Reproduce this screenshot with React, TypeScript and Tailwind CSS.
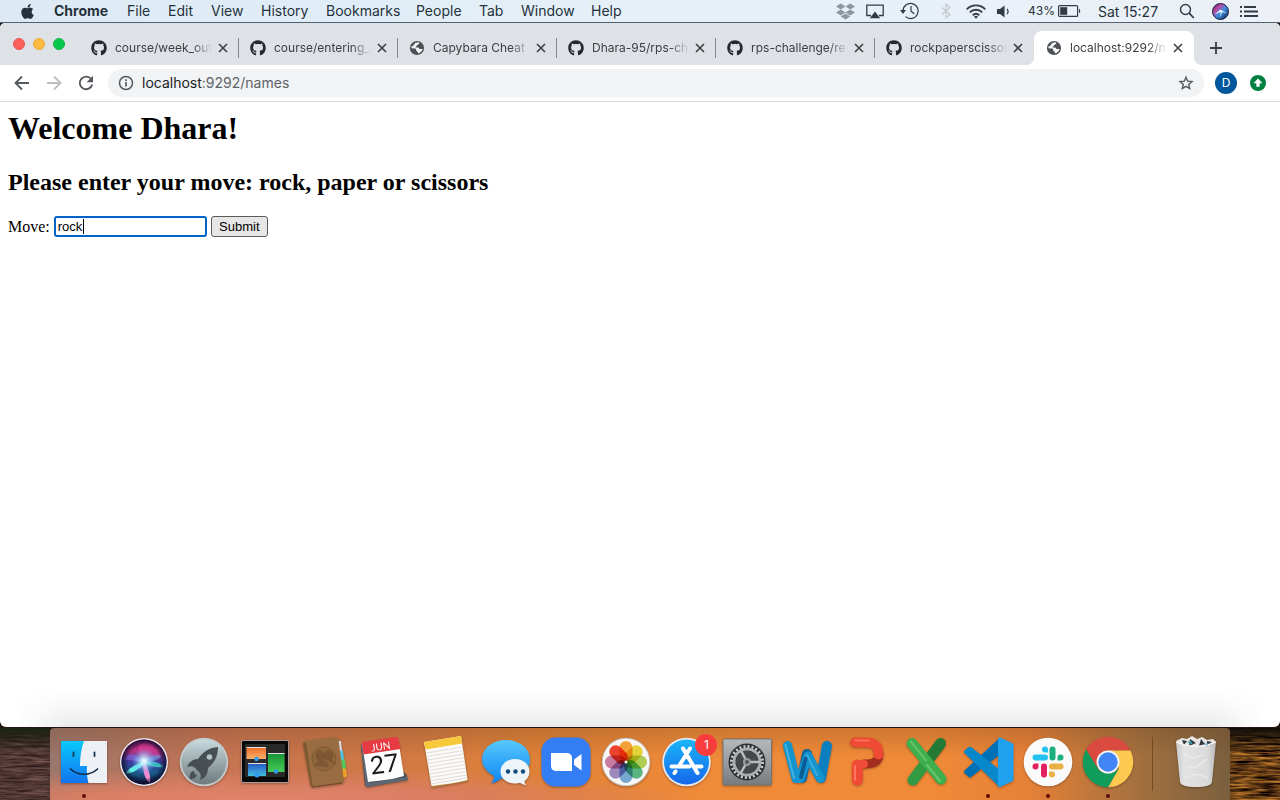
import { useState } from "react";
import type { ReactNode } from "react";
import { FaApple, FaDropbox, FaGithub } from "react-icons/fa";

/* ---------- Menu bar ---------- */

const menus = [
  { label: "Chrome", cls: "w-[73px] font-bold" },
  { label: "File", cls: "w-[41px]" },
  { label: "Edit", cls: "w-[43px]" },
  { label: "View", cls: "w-[50px]" },
  { label: "History", cls: "w-[65px]" },
  { label: "Bookmarks", cls: "w-[90px]" },
  { label: "People", cls: "w-[63px]" },
  { label: "Tab", cls: "w-[42px]" },
  { label: "Window", cls: "w-[70px]" },
  { label: "Help", cls: "w-[40px]" },
];

function SiriOrb({ id }: { id: string }) {
  return (
    <>
      <defs>
        <radialGradient id={id + "core"} cx="50%" cy="50%" r="50%">
          <stop offset="0" stopColor="#fff" />
          <stop offset=".25" stopColor="#c8f4ff" stopOpacity=".85" />
          <stop offset="1" stopColor="#5aa0ff" stopOpacity="0" />
        </radialGradient>
        <linearGradient id={id + "bg"} x1="0" y1="0" x2="0" y2="1">
          <stop offset="0" stopColor="#8a2070" />
          <stop offset=".25" stopColor="#b8307e" />
          <stop offset=".5" stopColor="#3c3a9c" />
          <stop offset=".75" stopColor="#1a5c8a" />
          <stop offset="1" stopColor="#140e38" />
        </linearGradient>
        <radialGradient id={id + "edge"}>
          <stop offset=".7" stopColor="#0a0a28" stopOpacity="0" />
          <stop offset="1" stopColor="#0a0a28" stopOpacity=".85" />
        </radialGradient>
      </defs>
      <circle cx="26" cy="26" r="24" fill="#eeeaf0" />
      <circle cx="26" cy="26" r="22.5" fill={"url(#" + id + "bg)"} />
      <path d="M26 26C17 12 20 8 27 7c10 0 16 8 15 15-3-5-10-2-16 4z" fill="#e8409a" opacity=".5" />
      <path d="M26 25C15 16 9 17 6 24c5-1 12 1 20 3z" fill="#7a62d8" opacity=".7" />
      <path d="M26 26C17 28 10 33 7 38c8-1 15-5 20-11z" fill="#62f0e6" />
      <path d="M26 26c8-2 15 0 20 5-7 1-14 0-20-4z" fill="#3ad8c0" opacity=".8" />
      <path d="M26 25c7-6 13-7 18-5-4 4-10 6-18 6z" fill="#7ab8f4" opacity=".5" />
      <path d="M25 27c0 10 2 16 7 21 1-7-1-15-5-21z" fill="#f48ad0" />
      <circle cx="26" cy="26" r="22.5" fill={"url(#" + id + "edge)"} />
      <circle cx="26" cy="25" r="13" fill={"url(#" + id + "core)"} />
    </>
  );
}

function MenuBar() {
  return (
    <header className="flex h-[23px] shrink-0 items-center border-b border-[#50616f] bg-linear-to-r from-[#ddeaf4] via-[#e5f0f8] to-[#edf1f7] pr-[22px] pl-[19px] text-[14px] text-[#25323c]">
      <a href="#apple" aria-label="Apple menu" className="w-[35px]">
        <FaApple className="size-[17px]" />
      </a>
      <nav className="flex leading-[22px]">
        {menus.map((m) => (
          <a key={m.label} href={"#" + m.label.toLowerCase()} className={m.cls}>
            {m.label}
          </a>
        ))}
      </nav>
      <div className="ml-auto flex items-center">
        <FaDropbox className="mr-[11px] size-[19px] text-[#8e979f]" />
        <svg viewBox="0 0 18 15" className="mr-[16px] h-[15px] w-[18px]">
          <path d="M5 11.5H.8V1.2h16.4v10.3H13" fill="none" stroke="#333c45" strokeWidth="1.3" />
          <path d="M9 7.5l5.2 6.7H3.8z" fill="#333c45" />
        </svg>
        <svg viewBox="0 0 20 18" className="mr-[21px] h-[18px] w-[20px]" fill="none" stroke="#333c45" strokeWidth="1.2">
          <path d="M3 9a7.6 7.6 0 1 1 2.5 5.6" />
          <path d="M11 4v5.2l3.2 2.6" />
          <path d="M0 8h6L3 12z" fill="#333c45" stroke="none" />
        </svg>
        <svg viewBox="0 0 10 16" className="mr-[15px] h-[16px] w-[10px]" fill="none" stroke="#c3c9cf" strokeWidth="1.2">
          <path d="M1 4.5l8 7-4 3.5V1l4 3.5-8 7" />
        </svg>
        <svg viewBox="0 0 20 15" className="mr-[10px] h-[15px] w-[20px]" fill="none" stroke="#333c45" strokeWidth="1.9">
          <path d="M.8 5.3c5-5.2 13.4-5.2 18.4 0M3.8 8.3c3.5-3.5 8.9-3.5 12.4 0M6.7 11.2c2-1.9 4.6-1.9 6.6 0" />
          <path d="M10 14.8l-2-2.2c1.2-1 2.8-1 4 0z" fill="#333c45" stroke="none" />
        </svg>
        <svg viewBox="0 0 16 13" className="mr-[16px] h-[13px] w-[16px]">
          <path d="M1 4h3l4.5-3.5v12L4 9H1z" fill="#333c45" />
          <path d="M11 3.8c1.3 1.6 1.3 3.8 0 5.4" fill="none" stroke="#333c45" strokeWidth="1.2" />
        </svg>
        <span className="w-[30px] text-[12px]">43%</span>
        <svg viewBox="0 0 24 12" className="mr-[16px] h-[12px] w-[24px]">
          <rect x=".6" y=".6" width="19" height="10.8" rx="1" fill="none" stroke="#333c45" strokeWidth="1.2" />
          <rect x="2.2" y="2.2" width="7" height="7.6" fill="#333c45" />
          <path d="M21 3.8c1.6.6 1.6 3.8 0 4.4z" fill="#333c45" />
        </svg>
        <span className="w-[81px]">Sat 15:27</span>
        <svg viewBox="0 0 16 16" className="mr-[17px] h-[16px] w-[16px]" fill="none" stroke="#333c45" strokeWidth="1.4">
          <circle cx="6.5" cy="6.5" r="5" />
          <path d="M10.2 10.2l4.6 4.8" strokeWidth="1.8" />
        </svg>
        <svg viewBox="0 0 17 17" className="mr-[11px] size-[17px]">
          <defs>
            <linearGradient id="menuSiri" x1="0" y1="0" x2="1" y2="1">
              <stop offset="0" stopColor="#1b2f72" />
              <stop offset=".3" stopColor="#c0479c" />
              <stop offset=".55" stopColor="#3a8fe0" />
              <stop offset="1" stopColor="#101840" />
            </linearGradient>
          </defs>
          <circle cx="8.5" cy="8.5" r="8" fill="url(#menuSiri)" stroke="#1a1f3c" />
          <path d="M8.5 6.5l-6 5 6-2.500v5.500l1.500-5.500 5 1.500z" fill="#e9f6ff" />
        </svg>
        <svg viewBox="0 0 18 11" className="h-[11px] w-[18px]" stroke="#333c45" strokeWidth="1.8">
          <path d="M0 1h2M0 5.5h2M0 10h2M4 1h12M4 5.5h14M4 10h14" />
        </svg>
      </div>
    </header>
  );
}

/* ---------- Browser tabs ---------- */

function Globe() {
  return (
    <svg viewBox="0 0 16 16" className="size-[16px] shrink-0">
      <circle cx="8" cy="8" r="7.1" fill="#4d5156" />
      <path d="M6.9 2.4c1 .6 1.600-.2 2.700 0 1 .3.700 1.200 0 1.500-.6.300-.5 1-1.200 1.200-.8.200-.4 1-1.200 1.300-.6.200-.2.700-.8 1h2.800c.9.300.6 1.400 1.600 1.600.9.200 1.800-.2 2.900 0-.6 2.200-2.300 3.900-4.500 4.400l-.4-1.300c-.3-.9-1.500-.8-1.600-1.900 0-.9-.2-1.500-1.100-1.700L2.400 8.300c-.1-.9.100-1.700.4-2.400.9.600 1.700.100 1.900-.8.200-1 1.300-1 1.300-1.900z" fill="#f4f5f6" />
    </svg>
  );
}

const tabs = [
  { title: "course/week_out", github: true },
  { title: "course/entering_", github: true },
  { title: "Capybara Cheat", github: false },
  { title: "Dhara-95/rps-ch", github: true },
  { title: "rps-challenge/re", github: true },
  { title: "rockpaperscissor", github: true },
  { title: "localhost:9292/n", github: false },
];

function Tab({ title, github, active, divided }: { title: string; github: boolean; active: boolean; divided: boolean }) {
  return (
    <div
      className={
        active
          ? "relative flex h-[34px] w-[160px] min-w-0 items-center rounded-t-[8px] bg-white pr-[11px] pl-[12px]"
          : "flex h-[34px] w-[159px] min-w-0 items-center pl-[11px]"
      }
    >
      {active && (
        <>
          <span className="absolute bottom-0 -left-[8px] size-[8px] bg-[radial-gradient(circle_at_0_0,transparent_8px,white_8px)]" />
          <span className="absolute -right-[8px] bottom-0 size-[8px] bg-[radial-gradient(circle_at_100%_0,transparent_8px,white_8px)]" />
        </>
      )}
      {github ? <FaGithub className="size-[16px] shrink-0 text-[#24292e]" /> : <Globe />}
      <a href="#tab" className="ml-[8px] min-w-0 flex-1 overflow-hidden mask-r-from-80% text-[12px] leading-[20px] whitespace-nowrap text-[#3c4043]">
        {title}
      </a>
      <button aria-label={"Close " + title} className="ml-[6px] shrink-0">
        <svg viewBox="0 0 10 10" className="size-[10px]" stroke="#3c4043" strokeWidth="1.6">
          <path d="M1 1l8 8M9 1L1 9" />
        </svg>
      </button>
      {!active && <span className={divided ? "ml-[10px] h-[20px] w-px shrink-0 bg-[#84888d]" : "ml-[10px] w-px shrink-0"} />}
    </div>
  );
}

function Toolbar() {
  return (
    <div className="flex h-[37px] items-center border-b border-[#d9dbdd] bg-white px-[14px]">
      <button aria-label="Back">
        <svg viewBox="0 0 16 16" className="size-[16px]" fill="none" stroke="#55595e" strokeWidth="1.8">
          <path d="M15 8H2M8 1.5L1.5 8 8 14.5" />
        </svg>
      </button>
      <button aria-label="Forward" className="ml-[16px]">
        <svg viewBox="0 0 16 16" className="size-[16px]" fill="none" stroke="#bcbec1" strokeWidth="1.8">
          <path d="M1 8h13M8 1.5L14.5 8 8 14.5" />
        </svg>
      </button>
      <button aria-label="Reload" className="ml-[16px]">
        <svg viewBox="0 0 16 16" className="size-[16px]">
          <path d="M13.2 4.2A6.3 6.3 0 1 0 14.2 9.5" fill="none" stroke="#55595e" strokeWidth="1.9" />
          <path d="M15 .8v6.4H8.6z" fill="#55595e" />
        </svg>
      </button>
      <form className="ml-[14px] flex h-[28px] flex-1 items-center rounded-full bg-[#f1f3f4] px-[10px]">
        <svg viewBox="0 0 16 16" className="size-[16px]" fill="none" stroke="#55595e" strokeWidth="1.5">
          <circle cx="8" cy="8" r="6.5" />
          <path d="M8 7v4.5M8 4.3V6" strokeWidth="1.7" />
        </svg>
        <a href="#address" aria-label="Address" className="ml-[8px] flex-1 text-[14px] leading-[18px] text-[#5f6368]">
          <span className="text-[#202124]">localhost</span>:9292/names
        </a>
        <button type="button" aria-label="Bookmark this page">
          <svg viewBox="0 0 16 16" className="size-[16px]" fill="none" stroke="#55595e" strokeWidth="1.4">
            <path d="M8 2.2l1.7 4 4.300.4-3.300 2.800 1 4.200L8 11.400l-3.700 2.200 1-4.200L2 6.600l4.300-.4z" />
          </svg>
        </button>
      </form>
      <button aria-label="Profile" className="ml-[11px] size-[22px] rounded-full bg-[#00579b] text-[12px] text-white">
        D
      </button>
      <button aria-label="Update" className="ml-[13px]">
        <svg viewBox="0 0 16 16" className="size-[16px]">
          <circle cx="8" cy="8" r="8" fill="#008141" />
          <path d="M8 3.5l4.5 4.7H9.7v3.6H6.3V8.2H3.5z" fill="#fff" />
        </svg>
      </button>
    </div>
  );
}

/* ---------- Dock icons, each on a 52 unit grid ---------- */

const petals = ["#f9a63a", "#ecd93a", "#b5d456", "#5dbb86", "#79add8", "#a48fc6", "#d07fa8", "#f2452f"];

function Finder() {
  return (
    <>
      <defs>
        <linearGradient id="fin" x1="0" y1="0" x2="0" y2="1">
          <stop offset="0" stopColor="#08c8fb" />
          <stop offset="1" stopColor="#1275ee" />
        </linearGradient>
      </defs>
      <path d="M3 5h46v42H3z" fill="#edf1f6" />
      <path d="M3 5h23c-3 8-4 16-4 25h7c-.5 6 .2 12 1.5 17H3z" fill="url(#fin)" />
      <path d="M15.5 16.5v3.5M36.5 16.5v3.5" stroke="#17334d" strokeWidth="1.8" strokeLinecap="round" />
      <path d="M12.5 33C20 40 32 40 39.5 33" fill="none" stroke="#122b44" strokeWidth="1.7" strokeLinecap="round" />
    </>
  );
}

function Launchpad() {
  return (
    <>
      <defs>
        <linearGradient id="lau" x1="0" y1="0" x2="0" y2="1">
          <stop offset="0" stopColor="#c7dade" />
          <stop offset="1" stopColor="#6f7a7d" />
        </linearGradient>
      </defs>
      <circle cx="26" cy="26" r="24.3" fill="#c5cbcc" />
      <circle cx="26" cy="26" r="22.5" fill="url(#lau)" />
      <path d="M40 11c-10 1-15 5-20 12-5 0-9 3-11 8 3-1 5-1 7 0l2 2 4 4c1 2 1 4 0 7 6-2 8-7 8-12 6-5 10-11 10-21z" fill="#484f53" />
      <path d="M16 35c-3 0-5 4-4 8 4 0 7-2 7-5l-2 1z" fill="#484f53" />
      <circle cx="31.500" cy="21" r="2.8" fill="#b5c4c8" />
    </>
  );
}

function Spaces() {
  return (
    <>
      <defs>
        <linearGradient id="spo" x1="0" y1="0" x2="0" y2="1"><stop stopColor="#ef6a25" /><stop offset="1" stopColor="#f6b06c" /></linearGradient>
        <linearGradient id="spb" x1="0" y1="0" x2="0" y2="1"><stop stopColor="#2252c5" /><stop offset="1" stopColor="#45bedc" /></linearGradient>
        <linearGradient id="spg" x1="0" y1="0" x2="0" y2="1"><stop stopColor="#159335" /><stop offset="1" stopColor="#48cb56" /></linearGradient>
      </defs>
      <rect x="2" y="4" width="48" height="43" rx="2" fill="#a99a96" />
      <rect x="3" y="5" width="46" height="41" rx="1" fill="#090909" />
      <path d="M6 8h40v33H6z" fill="#29292a" />
      <path d="M7.500 11H27v12H7.500z" fill="url(#spo)" />
      <path d="M9 27h18v13H9z" fill="url(#spb)" />
      <path d="M29 17h16.500v19H29z" fill="url(#spg)" />
      <path d="M7.500 11.500H27M9 27.500h18M29 17.500h16.500" stroke="#e8dfe0" />
      <g fill="#2c9bf0"><circle cx="17.500" cy="23" r="2.2" /><circle cx="18" cy="39" r="2.5" /><circle cx="37" cy="35.500" r="2.2" /></g>
    </>
  );
}

function Contacts() {
  return (
    <>
      <path d="M38 5l4 0 1 10-4 1z" fill="#d8dde0" />
      <path d="M40 15l4-.5 1 9-4 1z" fill="#4fc4e0" />
      <path d="M41 24l5-.5 1 9-5 1z" fill="#52c75c" />
      <path d="M42 33l5-.5 1 8-5 2z" fill="#efa126" />
      <path d="M4 7q0-2 2-2.300L36 1q3 0 3.500 2.500L45 45q0 2-2 2.300L14 51.500q-2 0-2.500-2z" fill="#996d41" />
      <path d="M4 7l3-1 7 45q-2 0-2.500-2z" fill="#805831" />
      <path d="M13 51l30-4" stroke="#6b4727" />
      <circle cx="25" cy="23" r="12" fill="#8f653c" stroke="#80592f" />
      <path d="M16 30c1-4 4-3 4-5-3-2-4-10 1-10s5 8 3 10c1 2 5 1 5 6M27 24c-2-4-1-10 3-9 4 0 5 7 2 9 1 2 3 1 4 4" fill="#7d5733" stroke="#735031" strokeWidth=".7" />
    </>
  );
}

function Calendar() {
  return (
    <>
      <path d="M2 9l5-1 40 30 2 6-40 7-3-2z" fill="#46515c" />
      <path d="M2 9l2 0 7 38 37-6 1 3-42 7z" fill="#5d6873" />
      <path d="M3 7l36-5 6 38q-10 3-19 4l-17 2z" fill="#fdfdfd" />
      <path d="M3 8q0-2 2-2.300L37 1q2 0 2.500 2l2 10L4.500 18.500z" fill="#e63b43" />
      <g transform="rotate(-8 24 26)" textAnchor="middle" fontFamily="Lato, sans-serif">
        <text x="24" y="14" fontSize="10" fill="#fff">JUN</text>
        <text x="25" y="37" fontSize="25" fontWeight="400" fill="#1b1b1b">27</text>
      </g>
    </>
  );
}

function Notes() {
  return (
    <>
      <path d="M5 6L42 0l7 45-36 6.500z" fill="#b78933" />
      <path d="M5 6L42 0l6.500 44q-8 2-17 3.500L12.500 50z" fill="#fbfaf8" />
      <path d="M5 6L42 0l1.200 7.500L6.500 13.500z" fill="#f7c83a" />
      <g stroke="#d3d0ce" strokeWidth=".7">
        <path d="M7 17l37-6M7.500 20.500l37-6M8 24l37-6M8.500 27.500l37-6M9 31l37-6M9.500 34.500l37-6M10 38l37-6M10.500 41.500l37-6M11 45l37-6M12 48l36-6" />
      </g>
    </>
  );
}

function Messages() {
  return (
    <>
      <defs>
        <linearGradient id="msg" x1="0" y1="0" x2="0" y2="1"><stop stopColor="#56c9fb" /><stop offset="1" stopColor="#1186f2" /></linearGradient>
      </defs>
      <path d="M26 4c13 0 24 8 24 19.500S39 43 26 43c-2 0-4 0-5.500-.5C18 45.500 14 47 11 47c2-2 3-4 3-7C7 36.500 2 30.500 2 23.500 2 12 13 4 26 4z" fill="url(#msg)" />
      <path d="M35 23c8 0 14.500 5 14.500 12.500 0 4-2 7.500-5 9.500 0 2 .5 3 2 4-3 0-5-1-6.500-2.200-1.500.5-3 .7-5 .7-8 0-14.500-5-14.500-12S27 23 35 23z" fill="#eef5f9" />
      <g fill="#134b7d"><circle cx="28" cy="35.500" r="2.2" /><circle cx="35.500" cy="35.500" r="2.2" /><circle cx="43" cy="35.500" r="2.2" /></g>
    </>
  );
}

function Zoom() {
  return (
    <>
      <rect x="1.500" y="1.500" width="49" height="49" rx="14" fill="#347ef5" />
      <path d="M11 17h15c4 0 6 2 6 5v13H17c-4 0-6-2-6-5zM34 23.500l7.500-5.500v16.500L34 29z" fill="#fff" />
    </>
  );
}

function Photos() {
  return (
    <>
      <circle cx="26" cy="26" r="24.3" fill="#c9c3be" />
      <circle cx="26" cy="26" r="23.3" fill="#f8f7f5" />
      {petals.map((c, i) => (
        <rect key={c} x="19.500" y="5" width="13" height="21" rx="6.500" fill={c} className="mix-blend-multiply" transform={"rotate(" + i * 45 + " 26 26)"} />
      ))}
      <circle cx="26" cy="26" r="1.5" fill="#fff" />
    </>
  );
}

function AppStore() {
  return (
    <>
      <defs>
        <linearGradient id="aps" x1="0" y1="0" x2="0" y2="1"><stop stopColor="#19b5f8" /><stop offset="1" stopColor="#1668ec" /></linearGradient>
      </defs>
      <circle cx="26.500" cy="26" r="24.3" fill="#e8e9ec" />
      <circle cx="26.500" cy="26" r="22.500" fill="url(#aps)" />
      <g stroke="#fff" strokeWidth="4" strokeLinecap="round" fill="none">
        <path d="M23 12.500L37.500 37M30 12.500L19 30M11.500 30.500h18M36 30.500h5.500M15.500 35.500L14.500 37" />
      </g>
    </>
  );
}

function Settings() {
  return (
    <>
      <defs>
        <linearGradient id="set" x1="0" y1="0" x2="0" y2="1"><stop stopColor="#b6b8ba" /><stop offset=".5" stopColor="#999d9f" /><stop offset="1" stopColor="#777b7d" /></linearGradient>
      </defs>
      <rect x="2" y="3" width="48.500" height="46" rx="1.500" fill="url(#set)" stroke="#737678" />
      <circle cx="26" cy="26" r="18.500" fill="#2d2f30" />
      <circle cx="26" cy="26" r="15.500" fill="none" stroke="#c8cacb" strokeWidth="3" strokeDasharray="2 2.058" />
      <circle cx="26" cy="26" r="13" fill="none" stroke="#aaadaf" strokeWidth="3" />
      <circle cx="26" cy="26" r="11" fill="#454849" />
      <path d="M26 26h13M26 26L20 14.500M26 26l-6.500 11.500" stroke="#b9bcbd" strokeWidth="2.500" />
      <circle cx="26" cy="26" r="4" fill="#9b9ea0" />
      <circle cx="26" cy="26" r="2" fill="#55595b" />
    </>
  );
}

function Word() {
  return (
    <g fill="none" strokeLinecap="round" strokeLinejoin="round" strokeWidth="10">
      <path d="M21 42l5-24" stroke="#0967a1" />
      <path d="M40 42l6-32" stroke="#0b7fc0" />
      <path d="M6.500 9.500L15 42.500h4L27 20l12 22" stroke="#1494cf" strokeWidth="9" />
      <path d="M4.500 9L13 42" stroke="#42b2e1" strokeWidth="2" />
      <path d="M26 19l10 20" stroke="#3aacdd" strokeWidth="2" />
      <path d="M24.500 23L20 41" stroke="#075d94" strokeWidth="4" />
    </g>
  );
}

function PowerPoint() {
  return (
    <g fill="none" strokeLinecap="round" strokeWidth="10">
      <path d="M23 28c11 0 15-3 15-10" stroke="#a52c20" strokeWidth="9" />
      <path d="M14 6.500h11c9 0 12.500 4 12.500 12" stroke="#ef4a34" />
      <path d="M14 4.500h14" stroke="#ff7059" strokeWidth="2" />
      <path d="M16.500 29v15" stroke="#f04a35" strokeWidth="11" />
      <path d="M16 28h7" stroke="#ef4d38" strokeWidth="8" />
      <path d="M14 30v14" stroke="#ff7461" strokeWidth="2" />
    </g>
  );
}

function Excel() {
  return (
    <g fill="none" strokeLinecap="round" strokeWidth="10">
      <path d="M39.500 7.500L28 23" stroke="#247a35" strokeWidth="11" />
      <path d="M24 28L12 44" stroke="#329a42" strokeWidth="11" />
      <path d="M11 7.500L40 43" stroke="#3fae4c" strokeWidth="11" />
      <path d="M10 5.500l15 19M26 29l13 16" stroke="#65c66d" strokeWidth="2" />
    </g>
  );
}

function Code() {
  return (
    <>
      <path d="M38 1.500v17L9 41q-1 1-2 0l-4.500-4q-1-1.500 0-2.500z" fill="#0070b6" />
      <path d="M2.500 17q-1-1 0-2.500L7 11q1-1 2 0l29 23v17.500z" fill="#0788cc" />
      <path d="M38 1.500L50 7q1.500.5 1.500 2v34.500q0 1.500-1.500 2L38 51q-2 .5-2-1V3q0-2 2-1.500z" fill="#1fa1ee" />
    </>
  );
}

function Chrome() {
  return (
    <>
      <path d="M4.200 13.400A25.200 25.200 0 0 1 48.400 14.400H26L14.500 31z" fill="#db4a40" />
      <path d="M48.400 14.400A25.200 25.200 0 0 1 26 51.200L37 32 26 14.400z" fill="#fdca4f" />
      <path d="M4.200 13.400L15.500 32c3 6 13 8 21 1L26 51.200A25.200 25.200 0 0 1 4.200 13.400z" fill="#109c5a" />
      <circle cx="26" cy="26" r="11.500" fill="#f3f5f7" />
      <circle cx="26" cy="26" r="9.700" fill="#4285f4" />
    </>
  );
}

function Trash() {
  return (
    <>
      <defs>
        <linearGradient id="tra"><stop stopColor="#c9c9c9" /><stop offset=".2" stopColor="#e3e3e3" /><stop offset=".8" stopColor="#dadada" /><stop offset="1" stopColor="#b8b8b8" /></linearGradient>
      </defs>
      <path d="M6 5l6-3 5 1 5-3 5 3 5-2 5 3 6-1 3 3-4 6H10z" fill="#e9e7e5" />
      <path d="M6 6q20 9 40 0l-4 40q-1 5-16 5T10 46z" fill="url(#tra)" />
      <path d="M12 4l5 1-3 4zM20 3l6 4-7 3zM31 3l4 5-6 2zM37 5l5 1-5 4z" fill="#34383d" />
      <path d="M17 6l4-1 2 4zM34 8l5-1-2 3z" fill="#3b9fb0" />
      <path d="M6 6q20 9 40 0" fill="none" stroke="#fafafa" />
      <path d="M14 18l10 4 9-3M16 30l9 2 12-9M15 42l12-4 11 4" fill="none" stroke="#ececec" strokeWidth="1.200" />
    </>
  );
}

function Slack() {
  return (
    <>
      <circle cx="26" cy="26" r="24.3" fill="#fbfafa" />
      <path d="M23 10.500a3 3 0 1 0 0 6h3v-3a3 3 0 0 0-3-3zM13.500 18.500H23a3 3 0 0 1 0 6h-9.500a3 3 0 0 1 0-6z" fill="#22c3ee" />
      <path d="M27.500 13.500a3 3 0 0 1 6 0v8a3 3 0 0 1-6 0zM41.500 21.500a3 3 0 1 0-6 0v3h3a3 3 0 0 0 3-3z" fill="#1db07f" />
      <path d="M38.500 27.500a3 3 0 0 1 0 6H30a3 3 0 0 1 0-6zM30 41.500a3 3 0 1 0 0-6h-3v3a3 3 0 0 0 3 3z" fill="#ebb044" />
      <path d="M25 38.500a3 3 0 0 1-6 0v-8a3 3 0 0 1 6 0zM10.500 30.500a3 3 0 1 0 6 0v-3h-3a3 3 0 0 0-3 3z" fill="#e2205f" />
    </>
  );
}

type DockApp = { name: string; art: ReactNode; running?: boolean; badge?: string };

const apps: DockApp[] = [
  { name: "Finder", art: <Finder />, running: true },
  { name: "Siri", art: <SiriOrb id="dock" /> },
  { name: "Launchpad", art: <Launchpad /> },
  { name: "Mission Control", art: <Spaces /> },
  { name: "Contacts", art: <Contacts /> },
  { name: "Calendar", art: <Calendar /> },
  { name: "Notes", art: <Notes /> },
  { name: "Messages", art: <Messages /> },
  { name: "Zoom", art: <Zoom /> },
  { name: "Photos", art: <Photos /> },
  { name: "App Store", art: <AppStore />, badge: "1" },
  { name: "System Preferences", art: <Settings /> },
  { name: "Word", art: <Word /> },
  { name: "PowerPoint", art: <PowerPoint /> },
  { name: "Excel", art: <Excel /> },
  { name: "Visual Studio Code", art: <Code />, running: true },
  { name: "Slack", art: <Slack />, running: true },
  { name: "Google Chrome", art: <Chrome />, running: true },
];

function DockItem({ name, art, running, badge }: DockApp) {
  return (
    <button aria-label={name} className="relative flex flex-col items-center pt-[8px] pb-[2px]">
      <svg viewBox="0 0 52 52" className="size-[52px] overflow-visible drop-shadow-[0_1px_1px_rgba(0,0,0,0.3)]">
        {art}
      </svg>
      <span className={running ? "mt-[6px] size-[4px] rounded-full bg-[#5c0b06]" : "mt-[6px] size-[4px]"} />
      {badge && (
        <span className="absolute top-[6px] -right-[5px] size-[22px] rounded-full bg-[#f93c3e] text-center text-[12px] leading-[22px] text-white">
          {badge}
        </span>
      )}
    </button>
  );
}

/* A strip of rippling water from the desktop wallpaper. */
function Water({ id, tint, left }: { id: string; tint: string; left: boolean }) {
  return (
    <svg className="h-[72px] w-[50px] shrink-0" aria-hidden="true">
      <defs>
        <filter id={id} x="0" y="0" width="100%" height="100%" colorInterpolationFilters="sRGB">
          <feTurbulence type="fractalNoise" baseFrequency=".04 .45" numOctaves="3" seed={left ? 4 : 9} />
          <feColorMatrix
            values={
              left
                ? ".5 0 0 0 .06  .4 0 0 0 .01  .36 0 0 0 .02  0 0 0 0 1"
                : "1.3 0 0 0 -.24  .9 0 0 0 -.2  .3 0 0 0 -.06  0 0 0 0 1"
            }
          />
        </filter>
        <linearGradient id={id + "s"} x1="0" y1="0" x2="0" y2="1">
          <stop stopColor={tint} />
          <stop offset=".35" stopColor={tint} stopOpacity="0" />
        </linearGradient>
      </defs>
      <rect width="50" height="72" filter={"url(#" + id + ")"} />
      <rect width="50" height="72" fill={"url(#" + id + "s)"} />
    </svg>
  );
}

function Dock() {
  return (
    <footer className="flex h-[73px] shrink-0 border-t border-[#201510] bg-[#1c130e]">
      <Water id="wl" tint="#1b2110" left />
      <div className="flex min-w-0 flex-1 rounded-t-[4px] bg-[radial-gradient(ellipse_at_18%_100%,#df8468_0%,#da7f64_12%,transparent_32%),linear-gradient(to_bottom,rgba(100,60,30,0.25),transparent_40%),linear-gradient(to_right,#9a766c_0%,#c57353_14%,#d07845_28%,#e08237_42%,#ef8a38_55%,#f08a38_75%,#e58037_83%,#a5713f_92%,#7a603e_100%)] px-[8px]">
        <div className="flex min-w-0 flex-1 justify-between">
          {apps.map((app) => (
            <DockItem key={app.name} {...app} />
          ))}
        </div>
        <div className="mt-[9px] mr-[17px] ml-[18px] h-[54px] w-px bg-[#774a22]" />
        <DockItem name="Trash" art={<Trash />} />
      </div>
      <Water id="wr" tint="#100c08" left={false} />
    </footer>
  );
}

/* ---------- Page ---------- */

export default function App() {
  const [move, setMove] = useState("rock");
  return (
    <div className="flex min-h-screen flex-col bg-[#1c130e] font-['Inter',sans-serif]">
      <MenuBar />
      <main className="flex flex-1 flex-col overflow-hidden rounded-t-[5px] rounded-b-[6px] bg-white">
        <div className="flex h-[42px] shrink-0 items-end bg-[#dee1e6]">
          <div className="flex w-[80px] shrink-0 gap-[8px] self-center pl-[13px]">
            <button aria-label="Close window" className="size-[12px] rounded-full border border-[#e8534f] bg-[#fc605c]" />
            <button aria-label="Minimise window" className="size-[12px] rounded-full border border-[#e9a93c] bg-[#fdbc40]" />
            <button aria-label="Zoom window" className="size-[12px] rounded-full border border-[#0cb543] bg-[#06c84f]" />
          </div>
          {tabs.map((t, i) => (
            <Tab key={t.title} {...t} active={i === tabs.length - 1} divided={i < tabs.length - 2} />
          ))}
          <button aria-label="New tab" className="mb-[11px] ml-[16px]">
            <svg viewBox="0 0 12 12" className="size-[12px]" stroke="#3c4043" strokeWidth="1.9">
              <path d="M6 0v12M0 6h12" />
            </svg>
          </button>
        </div>
        <Toolbar />
        <div className="flex-1 p-[8px] font-['Liberation_Serif',serif] text-black">
          <h1 className="text-[32px] leading-[37px] font-bold">Welcome Dhara!</h1>
          <h2 className="mt-[21px] text-[24px] leading-[28px] font-bold">Please enter your move: rock, paper or scissors</h2>
          <form className="mt-[20px] flex items-center gap-[4px]" onSubmit={(e) => e.preventDefault()}>
            <label htmlFor="move" className="text-[16px] leading-[21px]">
              Move:
            </label>
            <div className="relative">
              <input
                id="move"
                value={move}
                onChange={(e) => setMove(e.target.value)}
                className="block h-[21px] w-[153px] rounded-[3px] border-2 border-[#0063c6] bg-white px-[2px] font-['Liberation_Sans',sans-serif] text-[13px] outline-none"
              />
              <span className="absolute top-[3px] left-[29px] h-[15px] w-px bg-black" />
            </div>
            <button className="h-[21px] w-[57px] rounded-[3px] border border-[#5b5b5b] bg-[#e6e6e6] font-['Liberation_Sans',sans-serif] text-[13px] leading-[19px]">
              Submit
            </button>
          </form>
        </div>
        <div className="mx-[16px] h-[36px] bg-linear-to-b from-white to-[#ececec] mask-x-from-96%" />
      </main>
      <Dock />
    </div>
  );
}
